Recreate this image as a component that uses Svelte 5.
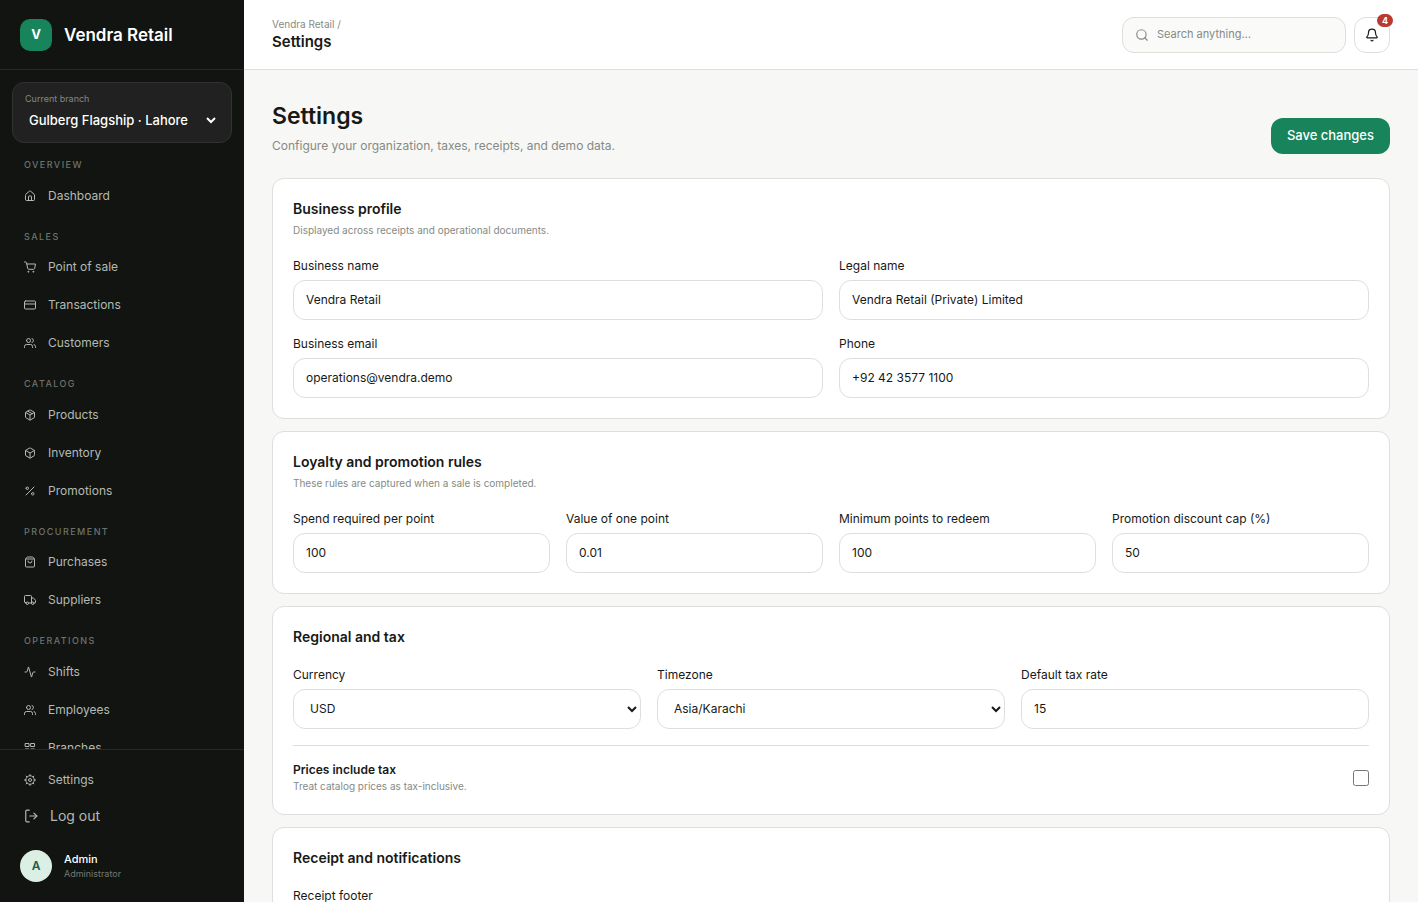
<script lang="ts">
  const nav = [
    { title: 'Overview', items: [{ icon: 'home', label: 'Dashboard' }] },
    {
      title: 'Sales',
      items: [
        { icon: 'cart', label: 'Point of sale' },
        { icon: 'card', label: 'Transactions' },
        { icon: 'users', label: 'Customers' },
      ],
    },
    {
      title: 'Catalog',
      items: [
        { icon: 'package', label: 'Products' },
        { icon: 'box', label: 'Inventory' },
        { icon: 'percent', label: 'Promotions' },
      ],
    },
    {
      title: 'Procurement',
      items: [
        { icon: 'bag', label: 'Purchases' },
        { icon: 'truck', label: 'Suppliers' },
      ],
    },
    {
      title: 'Operations',
      items: [
        { icon: 'activity', label: 'Shifts' },
        { icon: 'users', label: 'Employees' },
        { icon: 'grid', label: 'Branches' },
      ],
    },
  ];

  // 24x24 stroke icons, one list of paths each
  const icons: Record<string, string[]> = {
    home: [
      'M15 21v-8a1 1 0 0 0-1-1h-4a1 1 0 0 0-1 1v8',
      'M3 10a2 2 0 0 1 .709-1.528l7-6a2 2 0 0 1 2.582 0l7 6A2 2 0 0 1 21 10v9a2 2 0 0 1-2 2H5a2 2 0 0 1-2-2z',
    ],
    cart: [
      'M8 21.5a1 1 0 1 0 2 0 1 1 0 1 0-2 0',
      'M18 21.5a1 1 0 1 0 2 0 1 1 0 1 0-2 0',
      'M1 2h2.5a1.5 1.5 0 0 1 1.5 1.2L7.4 15a2 2 0 0 0 2 1.6h9.8a2 2 0 0 0 2-1.6L23 6H5.6',
    ],
    card: ['M3 4h18a2 2 0 0 1 2 2v12a2 2 0 0 1-2 2H3a2 2 0 0 1-2-2V6a2 2 0 0 1 2-2z', 'M1 10h22'],
    users: [
      'M17 21v-2a4 4 0 0 0-4-4H5a4 4 0 0 0-4 4v2',
      'M5 7a4 4 0 1 0 8 0 4 4 0 1 0-8 0',
      'M23 21v-2a4 4 0 0 0-3-3.87',
      'M16 3.13a4 4 0 0 1 0 7.75',
    ],
    package: [
      'M11 21.73a2 2 0 0 0 2 0l7-4A2 2 0 0 0 21 16V8a2 2 0 0 0-1-1.73l-7-4a2 2 0 0 0-2 0l-7 4A2 2 0 0 0 3 8v8a2 2 0 0 0 1 1.73z',
      'M12 22V12',
      'M3.29 7 12 12l8.71-5',
      'M7.5 4.27l9 5.15',
    ],
    box: [
      'M21 8a2 2 0 0 0-1-1.73l-7-4a2 2 0 0 0-2 0l-7 4A2 2 0 0 0 3 8v8a2 2 0 0 0 1 1.73l7 4a2 2 0 0 0 2 0l7-4A2 2 0 0 0 21 16z',
      'M3.3 7l8.7 5 8.7-5',
      'M12 22V12',
    ],
    percent: ['M20 4 4 20', 'M4 6.5a2.5 2.5 0 1 0 5 0 2.5 2.5 0 1 0-5 0', 'M15 17.5a2.5 2.5 0 1 0 5 0 2.5 2.5 0 1 0-5 0'],
    bag: [
      'M16 10a4 4 0 0 1-8 0',
      'M3.1 6.03h17.8',
      'M3.4 5.47A2 2 0 0 0 3 6.67V20a2 2 0 0 0 2 2h14a2 2 0 0 0 2-2V6.67a2 2 0 0 0-.4-1.2l-2-2.67A2 2 0 0 0 17 2H7a2 2 0 0 0-1.6.8z',
    ],
    truck: [
      'M15 17V5a2 2 0 0 0-2-2H3a2 2 0 0 0-2 2v11a1 1 0 0 0 1 1h2',
      'M15 18H9',
      'M20 18h2a1 1 0 0 0 1-1v-4.2a1 1 0 0 0-.22-.62L19.3 8.4a1 1 0 0 0-.78-.4H15',
      'M15 18.5a2.5 2.5 0 1 0 5 0 2.5 2.5 0 1 0-5 0',
      'M4 18.5a2.5 2.5 0 1 0 5 0 2.5 2.5 0 1 0-5 0',
    ],
    activity: [
      'M22 12h-2.48a2 2 0 0 0-1.93 1.46l-2.35 8.36a.25.25 0 0 1-.48 0L9.24 2.18a.25.25 0 0 0-.48 0l-2.35 8.36A2 2 0 0 1 4.49 12H2',
    ],
    grid: ['M3 3h7v6H3z', 'M14 3h7v6h-7z', 'M3 14h7v6H3z', 'M14 14h7v6h-7z'],
    settings: [
      'M3.5 12a8.5 8.5 0 1 0 17 0 8.5 8.5 0 1 0-17 0',
      'M9 12a3 3 0 1 0 6 0 3 3 0 1 0-6 0',
      'M12 1v2M12 21v2M1 12h2M21 12h2M4.2 4.2l1.4 1.4M18.4 18.4l1.4 1.4M4.2 19.8l1.4-1.4M18.4 5.6l1.4-1.4',
    ],
    logout: ['M17 17l5-5-5-5', 'M22 12H10', 'M9 22H5a2 2 0 0 1-2-2V4a2 2 0 0 1 2-2h4'],
    search: ['M21 21l-4.34-4.34', 'M3 11a8 8 0 1 0 16 0 8 8 0 1 0-16 0'],
    bell: [
      'M10.27 21a2 2 0 0 0 3.46 0',
      'M3.26 15.33A1 1 0 0 0 4 17h16a1 1 0 0 0 .74-1.67C19.41 13.96 18 12.5 18 8A6 6 0 0 0 6 8c0 4.5-1.41 5.96-2.74 7.33',
    ],
  };

  let profile = $state([
    { id: 'name', label: 'Business name', type: 'text', value: 'Vendra Retail' },
    { id: 'legal', label: 'Legal name', type: 'text', value: 'Vendra Retail (Private) Limited' },
    { id: 'email', label: 'Business email', type: 'email', value: 'operations@vendra.demo' },
    { id: 'phone', label: 'Phone', type: 'tel', value: '+92 42 3577 1100' },
  ]);
  let loyalty = $state([
    { id: 'spend', label: 'Spend required per point', value: '100' },
    { id: 'point', label: 'Value of one point', value: '0.01' },
    { id: 'minimum', label: 'Minimum points to redeem', value: '100' },
    { id: 'cap', label: 'Promotion discount cap (%)', value: '50' },
  ]);
  let taxRate = $state('15');
  let taxIncluded = $state(false);
  let footer = $state('');
  let query = $state('');
</script>

{#snippet icon(name: string, size: number)}
  <svg class="icon" viewBox="0 0 24 24" width={size} height={size} aria-hidden="true">
    {#each icons[name] as d}<path {d} />{/each}
  </svg>
{/snippet}

<div class="shell">
  <aside class="sidebar">
    <div class="brand">
      <span class="mark">V</span>
      <strong>Vendra Retail</strong>
    </div>
    <div class="branch">
      <label for="branch">Current branch</label>
      <select id="branch"><option>Gulberg Flagship · Lahore</option></select>
    </div>
    <nav>
      {#each nav as group}
        <section>
          <h3>{group.title}</h3>
          {#each group.items as item}
            <a class="nav-item" href="#{item.label.toLowerCase().replaceAll(' ', '-')}">
              {@render icon(item.icon, 12)}{item.label}
            </a>
          {/each}
        </section>
      {/each}
    </nav>
    <div class="side-foot">
      <a class="nav-item" href="#settings">{@render icon('settings', 12)}Settings</a>
      <button type="button" class="logout">{@render icon('logout', 14)}Log out</button>
      <div class="user">
        <span class="avatar">A</span>
        <div>
          <strong>Admin</strong>
          <small>Administrator</small>
        </div>
      </div>
    </div>
  </aside>

  <div class="main">
    <header class="topbar">
      <div>
        <div class="crumb">Vendra Retail /</div>
        <div class="here">Settings</div>
      </div>
      <div class="tools">
        <label class="search">
          {@render icon('search', 14)}
          <input type="search" placeholder="Search anything…" aria-label="Search" bind:value={query} />
        </label>
        <button type="button" class="bell" aria-label="Notifications">
          {@render icon('bell', 14)}
          <span class="badge">4</span>
        </button>
      </div>
    </header>

    <main>
      <div class="page-head">
        <div>
          <h1>Settings</h1>
          <p>Configure your organization, taxes, receipts, and demo data.</p>
        </div>
        <button type="button" class="save">Save changes</button>
      </div>

      <section class="card">
        <h2>Business profile</h2>
        <p class="hint">Displayed across receipts and operational documents.</p>
        <div class="fields two">
          {#each profile as f}
            <div class="field">
              <label for={f.id}>{f.label}</label>
              <input id={f.id} type={f.type} bind:value={f.value} />
            </div>
          {/each}
        </div>
      </section>

      <section class="card">
        <h2>Loyalty and promotion rules</h2>
        <p class="hint">These rules are captured when a sale is completed.</p>
        <div class="fields four">
          {#each loyalty as f}
            <div class="field">
              <label for={f.id}>{f.label}</label>
              <input id={f.id} inputmode="decimal" bind:value={f.value} />
            </div>
          {/each}
        </div>
      </section>

      <section class="card">
        <h2>Regional and tax</h2>
        <div class="fields three">
          <div class="field">
            <label for="currency">Currency</label>
            <select id="currency"><option>USD</option></select>
          </div>
          <div class="field">
            <label for="timezone">Timezone</label>
            <select id="timezone"><option>Asia/Karachi</option></select>
          </div>
          <div class="field">
            <label for="tax">Default tax rate</label>
            <input id="tax" inputmode="decimal" bind:value={taxRate} />
          </div>
        </div>
        <label class="switch">
          <span>
            <strong>Prices include tax</strong>
            <small>Treat catalog prices as tax-inclusive.</small>
          </span>
          <input type="checkbox" bind:checked={taxIncluded} />
        </label>
      </section>

      <section class="card">
        <h2>Receipt and notifications</h2>
        <div class="fields">
          <div class="field">
            <label for="footer">Receipt footer</label>
            <textarea id="footer" rows="3" bind:value={footer}></textarea>
          </div>
        </div>
      </section>
    </main>
  </div>
</div>

<style>
  :global(body) { margin: 0; }
  .shell {
    --ink: #171917; --muted: #858b84; --line: #dddfdb; --green: #18845c;
    display: flex; height: 100vh; overflow: hidden;
    background: #f7f7f5; color: var(--ink);
    font-family: Inter, "Liberation Sans", sans-serif; font-size: 12px; line-height: 1.5;
  }
  .shell * { box-sizing: border-box; }
  h1, h2, h3, p { margin: 0; }
  button, input, select, textarea { font: inherit; color: inherit; }
  small, .user strong, .switch strong { display: block; }
  .icon {
    flex: none; fill: none; stroke: currentColor; stroke-width: 2;
    stroke-linecap: round; stroke-linejoin: round; overflow: visible;
  }

  .sidebar {
    flex: 0 0 244px; display: flex; flex-direction: column;
    background: #111411; color: #b4bab3;
  }
  .brand {
    flex: none; height: 70px; display: flex; align-items: center; gap: 12px;
    padding: 0 20px; border-bottom: 1px solid #262926; color: #fff;
  }
  .brand strong { font-size: 17px; line-height: 24px; font-weight: 600; }
  .mark {
    width: 32px; height: 32px; display: grid; place-items: center;
    border-radius: 10px; background: var(--green); font-size: 13px; font-weight: 700;
  }
  .branch {
    flex: none; margin: 12px 12px 0; padding: 8px 12px;
    border: 1px solid #313331; border-radius: 12px; background: #202120;
  }
  .branch label { display: block; font-size: 9px; line-height: 15px; color: #858985; }
  .branch select {
    display: block; width: 100%; height: 28px; padding: 0; border: 0;
    background: transparent; color: #fff; font-size: 13px; font-weight: 500;
  }
  .branch option { color: #171917; }
  nav { flex: 1; min-height: 0; overflow: hidden; padding: 15px 12px 0; }
  nav section { margin-bottom: 16px; }
  nav h3 {
    padding: 0 12px 6px; color: #6d736d; font-size: 9px; font-weight: 500;
    letter-spacing: 0.16em; text-transform: uppercase;
  }
  .nav-item, .logout {
    height: 36px; display: flex; align-items: center; gap: 12px; padding: 0 12px;
    border-radius: 10px; color: inherit; text-decoration: none;
  }
  nav .nav-item + .nav-item { margin-top: 2px; }
  .nav-item:hover, .logout:hover { background: #1d211d; }
  .logout { width: 100%; border: 0; background: none; font-size: 14px; line-height: 20px; cursor: pointer; }
  .side-foot { flex: none; padding: 12px; border-top: 1px solid #262926; }
  .user { display: flex; align-items: center; gap: 12px; padding: 16px 8px 8px; }
  .avatar {
    width: 32px; height: 32px; display: grid; place-items: center; border-radius: 50%;
    background: #dcefe4; color: #22594a; font-weight: 600;
  }
  .user strong { color: #fff; font-size: 11px; line-height: 16px; font-weight: 500; }
  .user small { color: #737873; font-size: 9px; line-height: 14px; }

  .main { flex: 1; min-width: 0; display: flex; flex-direction: column; }
  .topbar {
    flex: none; height: 70px; display: flex; align-items: center; justify-content: space-between;
    padding: 0 28px; border-bottom: 1px solid var(--line); background: #fff;
  }
  .crumb { color: var(--muted); font-size: 10px; line-height: 15px; }
  .here { font-size: 15px; line-height: 20px; font-weight: 600; }
  .tools { display: flex; gap: 8px; }
  .search {
    width: 224px; height: 36px; display: flex; align-items: center; gap: 8px; padding: 0 12px;
    border: 1px solid var(--line); border-radius: 12px; background: #fafaf8; color: var(--muted);
  }
  .search input {
    flex: 1; min-width: 0; padding: 0; border: 0; outline: 0; background: none;
    color: var(--ink); font-size: 11px;
  }
  .search input::placeholder { color: var(--muted); opacity: 1; }
  .bell {
    position: relative; width: 36px; height: 36px; display: grid; place-items: center; padding: 0;
    border: 1px solid var(--line); border-radius: 12px; background: #fff; cursor: pointer;
  }
  .badge {
    position: absolute; top: -4px; right: -4px; min-width: 16px; padding: 0 5px;
    border-radius: 8px; background: #b93a32; color: #fff;
    font-size: 9px; line-height: 13px; font-weight: 700;
  }

  main { flex: 1; min-height: 0; overflow-y: auto; padding: 28px; scrollbar-width: none; }
  .page-head { display: flex; align-items: flex-end; justify-content: space-between; margin-bottom: 24px; }
  h1 { font-size: 23px; line-height: 36px; font-weight: 600; }
  .page-head p { margin-top: 4px; color: var(--muted); line-height: 16px; }
  .save {
    height: 36px; padding: 0 16px; border: 0; border-radius: 12px;
    background: var(--green); color: #fff; font-size: 13px; font-weight: 500; cursor: pointer;
  }
  .card {
    margin-bottom: 12px; padding: 20px; border: 1px solid var(--line);
    border-radius: 12px; background: #fff;
  }
  h2 { font-size: 14px; line-height: 20px; font-weight: 600; }
  .hint { margin-top: 4px; color: var(--muted); font-size: 10px; line-height: 15px; }
  .fields { display: grid; gap: 16px; margin-top: 20px; }
  .two { grid-template-columns: repeat(2, 1fr); }
  .three { grid-template-columns: repeat(3, 1fr); }
  .four { grid-template-columns: repeat(4, 1fr); }
  .field { display: flex; flex-direction: column; gap: 6px; min-width: 0; }
  .field label { line-height: 16px; }
  .field input, .field select, .field textarea {
    width: 100%; height: 40px; padding: 0 12px 1px; border: 1px solid var(--line);
    border-radius: 12px; background: #fff;
  }
  .field textarea { height: auto; padding: 10px 12px; }
  .field input:focus, .field select:focus { outline: 2px solid #18845c33; border-color: var(--green); }
  .switch {
    display: flex; align-items: center; justify-content: space-between;
    margin-top: 16px; padding-top: 16px; border-top: 1px solid var(--line);
  }
  .switch strong { margin-bottom: 1px; line-height: 16px; font-weight: 600; }
  .switch small { color: var(--muted); font-size: 10px; line-height: 15px; }
  .switch input { width: 16px; height: 16px; margin: 0; }
</style>
